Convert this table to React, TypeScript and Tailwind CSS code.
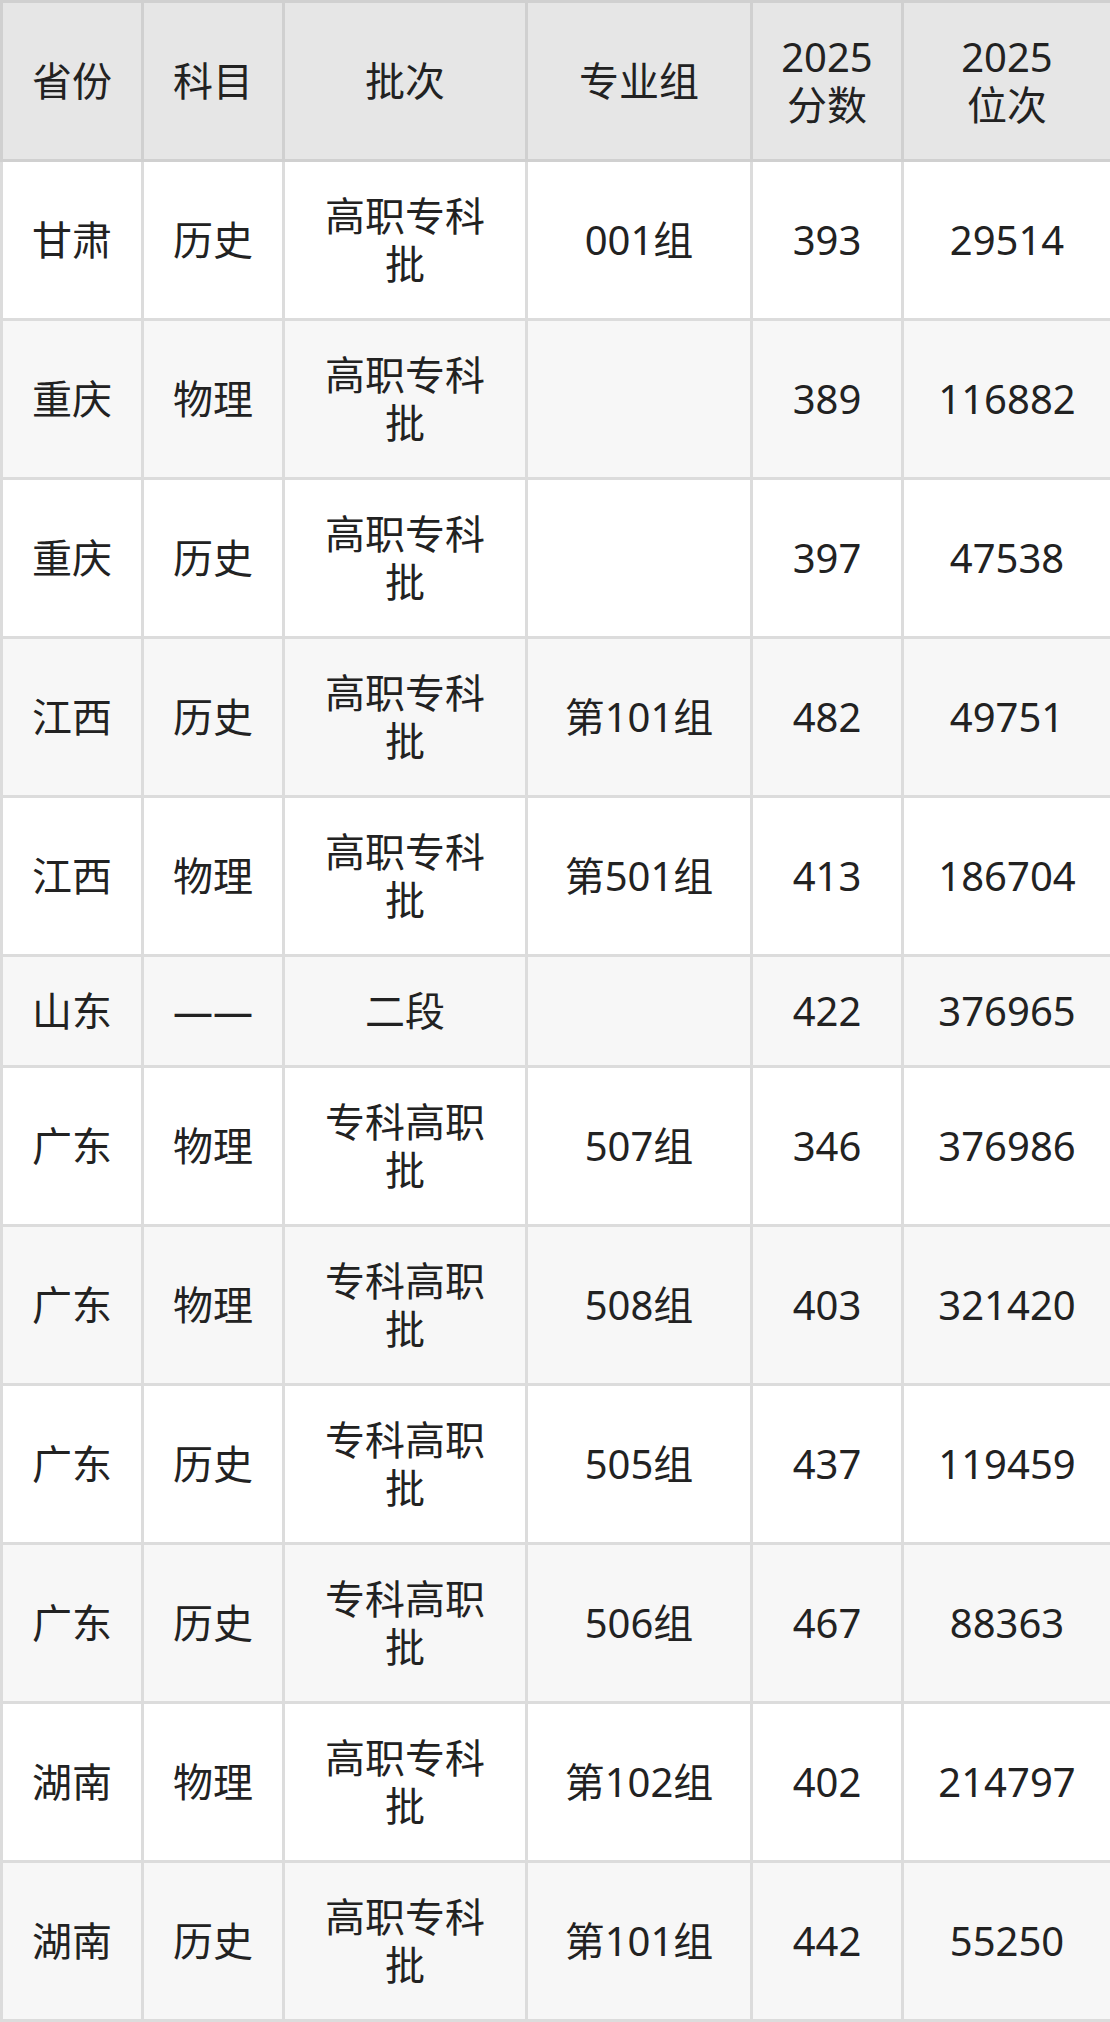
const rows: [string, string, string, string, string, string][] = [
  ["甘肃", "历史", "高职专科批", "001组", "393", "29514"],
  ["重庆", "物理", "高职专科批", "", "389", "116882"],
  ["重庆", "历史", "高职专科批", "", "397", "47538"],
  ["江西", "历史", "高职专科批", "第101组", "482", "49751"],
  ["江西", "物理", "高职专科批", "第501组", "413", "186704"],
  ["山东", "——", "二段", "", "422", "376965"],
  ["广东", "物理", "专科高职批", "507组", "346", "376986"],
  ["广东", "物理", "专科高职批", "508组", "403", "321420"],
  ["广东", "历史", "专科高职批", "505组", "437", "119459"],
  ["广东", "历史", "专科高职批", "506组", "467", "88363"],
  ["湖南", "物理", "高职专科批", "第102组", "402", "214797"],
  ["湖南", "历史", "高职专科批", "第101组", "442", "55250"],
];

// header lines, split the way the source table breaks them
const headers: string[][] = [
  ["省份"],
  ["科目"],
  ["批次"],
  ["专业组"],
  ["2025", "分数"],
  ["2025", "位次"],
];

export default function App() {
  return (
    <div className="w-[1110px] bg-white font-['Noto_Sans','Noto_Sans_CJK_SC',sans-serif] text-[40px] leading-[48px] text-[#222]">
      <table className="w-full table-fixed border-collapse">
        <colgroup>
          <col className="w-[141px]" />
          <col className="w-[141px]" />
          <col className="w-[243px]" />
          <col className="w-[225px]" />
          <col className="w-[151px]" />
          <col className="w-[209px]" />
        </colgroup>
        <thead>
          <tr>
            {headers.map((h, i) => (
              <th
                key={i}
                className="border-[3px] border-[#d0d0d0] bg-[#e6e6e6] px-[26px] py-[30px] text-center align-middle font-normal"
              >
                {h.map((line) => (
                  <div key={line}>{line}</div>
                ))}
              </th>
            ))}
          </tr>
        </thead>
        <tbody>
          {rows.map((r, i) => (
            <tr key={i} className={i % 2 === 1 ? "bg-[#f7f7f7]" : "bg-white"}>
              {r.map((c, j) => (
                <td
                  key={j}
                  className="border-[3px] border-[#dcdcdc] px-[26px] py-[30px] text-center align-middle"
                >
                  {c}
                </td>
              ))}
            </tr>
          ))}
        </tbody>
      </table>
    </div>
  );
}
